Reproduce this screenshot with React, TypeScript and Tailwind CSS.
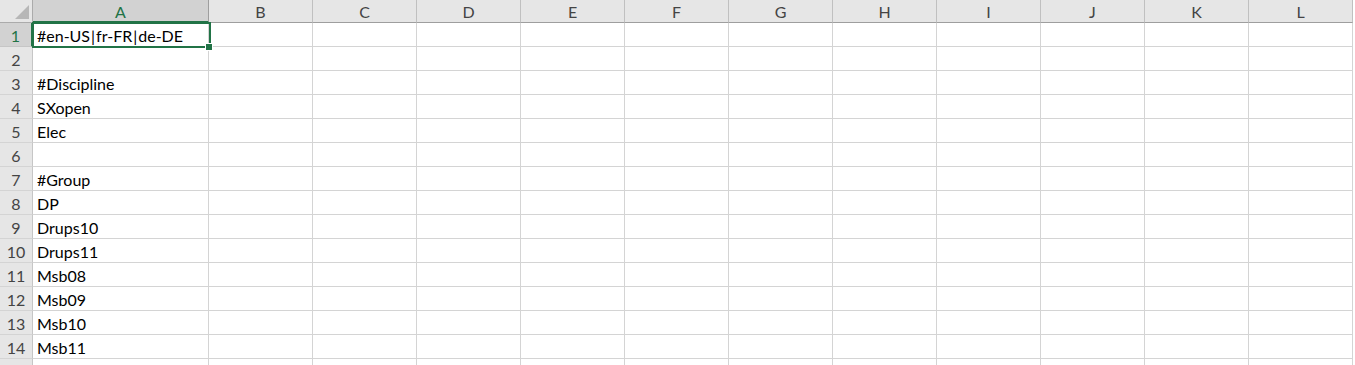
import React from "react";

const cols = ["A", "B", "C", "D", "E", "F", "G", "H", "I", "J", "K", "L"];
const data: Record<number, React.ReactNode> = {
  1: (
    <>
      #en-US<span className="mx-[1px]">|</span>fr-FR<span className="mx-[1px]">|</span>de-DE
    </>
  ),
  3: "#Discipline",
  4: "SXopen",
  5: "Elec",
  7: "#Group",
  8: "DP",
  9: "Drups10",
  10: "Drups11",
  11: "Msb08",
  12: "Msb09",
  13: "Msb10",
  14: "Msb11",
};

export default function App() {
  const rows = Array.from({ length: 15 }, (_, i) => i + 1);
  return (
    <div
      className="relative w-[1355px] h-[365px] overflow-hidden bg-white text-black"
      style={{ fontFamily: "Lato, 'Liberation Sans', sans-serif" }}
    >
      {/* header row */}
      <div className="flex h-[23px]">
        <div className="relative w-[33px] h-[23px] shrink-0 bg-[#e6e6e6] border-r border-b border-[#ababab]">
          <div className="absolute right-[3px] bottom-[3px] w-0 h-0 border-l-[14px] border-l-transparent border-b-[14px] border-b-[#b7b7b7]" />
        </div>
        {cols.map((c, i) => (
          <div
            key={c}
            className={
              i === 0
                ? "w-[176px] h-[23px] shrink-0 flex items-center justify-center pt-[2px] bg-[#d2d2d2] border-r border-[#9e9e9e] border-b-[2px] border-b-[#217346] text-[#217346] text-[16px]"
                : "w-[104px] h-[23px] shrink-0 flex items-center justify-center pt-[1px] bg-[#e6e6e6] border-r border-[#c0c0c0] border-b border-b-[#9e9e9e] text-[#444444] text-[16px]"
            }
          >
            {c}
          </div>
        ))}
      </div>
      {rows.map((r) => (
        <div key={r} className="flex h-[24px]">
          <div
            className={
              r === 1
                ? "w-[33px] h-[24px] shrink-0 flex items-center justify-center pt-[3px] bg-[#d2d2d2] border-r-[2px] border-r-[#217346] border-b border-b-[#c6c6c6] text-[#217346] text-[16px]"
                : "w-[33px] h-[24px] shrink-0 flex items-center justify-center pt-[3px] bg-[#e6e6e6] border-r border-r-[#c6c6c6] border-b border-b-[#d4d4d4] text-[#444444] text-[16px]"
            }
          >
            {r < 15 ? r : ""}
          </div>
          {cols.map((c, i) => (
            <div
              key={c}
              className={
                (i === 0 ? "w-[176px] " : "w-[104px] ") +
                "h-[24px] shrink-0 border-r border-b border-[#d4d4d4] flex items-center pt-[3px] pl-[4px] text-[16px] whitespace-nowrap"
              }
            >
              {i === 0 ? data[r] ?? "" : ""}
            </div>
          ))}
        </div>
      ))}
      {/* selection */}
      <div className="absolute left-[32px] top-[22px] w-[179px] h-[26px] border-2 border-[#217346] pointer-events-none" />
      <div className="absolute left-[205px] top-[43px] w-[8px] h-[8px] bg-white" />
      <div className="absolute left-[206px] top-[44px] w-[6px] h-[6px] bg-[#217346]" />
    </div>
  );
}
